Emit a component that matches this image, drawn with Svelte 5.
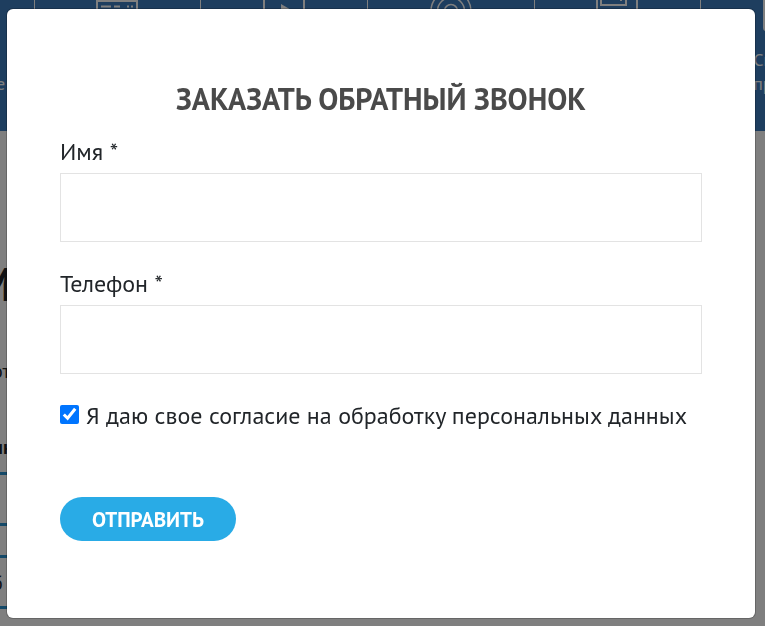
<script>
    let name = $state("");
    let phone = $state("");
    let agreed = $state(true);

    const services = [
        { icon: "none", lines: ["", "Продвижение"] },
        { icon: "site", lines: [] },
        { icon: "video", lines: [] },
        { icon: "target", lines: [] },
        { icon: "print", lines: [] },
        { icon: "phone", lines: ["Специ", "предл"] },
    ];

    function submit(event) {
        event.preventDefault();
    }
</script>

<div class="page" aria-hidden="true">
    <div class="services">
        <div class="services-row">
            {#each services as service}
                <div class="service">
                    <svg viewBox="0 0 42 42" fill="none" stroke="currentColor" stroke-width="2">
                        {#if service.icon === "site"}
                            <rect x="1" y="1" width="40" height="40" />
                            <path d="M1 12h40" />
                            <path d="M5 17.5h10M18 17.5h6M31 17.5h2M35 17.5h2" />
                        {:else if service.icon === "video"}
                            <rect x="1" y="1" width="40" height="40" />
                            <path d="M18 15l12 7-12 7z" fill="currentColor" stroke="none" />
                        {:else if service.icon === "target"}
                            <circle cx="21" cy="22" r="20" stroke-width="1.5" />
                            <circle cx="21" cy="22" r="13.5" stroke-width="1.5" />
                            <circle cx="21" cy="22" r="6.5" stroke-width="1.5" />
                        {:else if service.icon === "print"}
                            <rect x="1" y="1" width="40" height="40" />
                            <path d="M5 3v13h25V3M25 10v2" />
                        {:else if service.icon === "phone"}
                            <rect x="1" y="1" width="40" height="40" rx="2" />
                        {/if}
                    </svg>
                    <div class="service-name">
                        {#each service.lines as line}
                            <span>{line}</span>
                        {/each}
                    </div>
                </div>
            {/each}
        </div>
    </div>
    <div class="content">
        <div class="content-title">М</div>
        <div class="content-text">от</div>
        <div class="content-subtitle">ик</div>
        <div class="box"></div>
        <div class="box">б</div>
    </div>
</div>

<div class="overlay">
    <div class="modal" role="dialog" aria-modal="true" aria-labelledby="modal-title">
        <form onsubmit={submit}>
            <h2 id="modal-title">ЗАКАЗАТЬ ОБРАТНЫЙ ЗВОНОК</h2>

            <div class="field">
                <label for="name">Имя *</label>
                <input id="name" type="text" bind:value={name} />
            </div>

            <div class="field">
                <label for="phone">Телефон *</label>
                <input id="phone" type="tel" bind:value={phone} />
            </div>

            <div class="agree">
                <input id="agree" type="checkbox" bind:checked={agreed} />
                <label for="agree">Я даю свое согласие на обработку персональных данных</label>
            </div>

            <button type="submit">ОТПРАВИТЬ</button>
        </form>
    </div>
</div>

<style>
    :global(body) {
        margin: 0;
        overflow: hidden;
        background: #fff;
        color: #212529;
        font-family: "PT Sans", "Noto Sans", sans-serif;
    }

    .page {
        height: 100vh;
        overflow: hidden;
    }

    .services {
        margin-top: -40px;
        height: 171px;
        background: #3c7cbe;
        color: #fff;
        overflow: hidden;
    }

    .services-row {
        display: grid;
        grid-template-columns: repeat(6, 1fr);
        width: 1000px;
        height: 100%;
        margin-left: -132px;
    }

    .service {
        display: flex;
        flex-direction: column;
        align-items: center;
        gap: 17px;
        padding-top: 29px;
        border-right: 1px solid #fff;
    }

    .service svg {
        width: 42px;
        height: 42px;
    }

    .service-name {
        font-size: 18px;
        line-height: 24px;
    }

    .service-name span {
        display: block;
        min-height: 24px;
    }

    .service:first-child .service-name {
        width: 110px;
    }

    .service:last-child .service-name {
        width: 62px;
    }

    .content {
        width: 50%;
        margin-left: -8px;
    }

    .content-title {
        margin-left: -16px;
        padding-top: 123px;
        color: #212529;
        font-size: 46px;
        font-weight: 700;
        line-height: 60px;
    }

    .content-text {
        padding-top: 45px;
        font-size: 20px;
        line-height: 24px;
    }

    .content-subtitle {
        padding: 52px 0 13px;
        font-size: 20px;
        font-weight: 700;
        line-height: 24px;
    }

    .box {
        box-sizing: border-box;
        height: 54px;
        margin-bottom: 29px;
        border: 3px solid #2892d0;
        border-left: none;
        font-size: 20px;
        line-height: 50px;
    }

    .overlay {
        position: fixed;
        inset: 0;
        padding: 9px 10px 8px 7px;
        background: rgba(0, 0, 0, 0.5);
    }

    .modal {
        padding: 69px 53px 77px;
        background: #fff;
        border-radius: 6px;
        box-shadow: 0 0 0 1px rgba(0, 0, 0, 0.2);
    }

    form {
        display: flex;
        flex-direction: column;
    }

    h2 {
        margin: 0 0 15px;
        color: #4a4a4a;
        font-size: 30px;
        font-weight: 700;
        line-height: 42px;
        text-align: center;
        white-space: nowrap;
    }

    .field {
        display: flex;
        flex-direction: column;
        margin-bottom: 25px;
    }

    label {
        font-size: 24px;
        line-height: 34px;
        white-space: nowrap;
    }

    .field label {
        margin-bottom: 4px;
    }

    .field input {
        box-sizing: border-box;
        width: 100%;
        height: 69px;
        padding: 0 20px;
        border: 1px solid #e3e3e3;
        border-radius: 0;
        background: #fff;
        color: inherit;
        font: inherit;
        font-size: 24px;
    }

    .agree {
        display: flex;
        align-items: flex-start;
        gap: 7px;
        margin-bottom: 64px;
    }

    .agree input {
        flex: none;
        width: 19px;
        height: 19px;
        margin: 6px 0 0;
        accent-color: #0075ff;
    }

    button {
        align-self: flex-start;
        height: 44px;
        padding: 0 32px;
        border: none;
        border-radius: 22px;
        background: #29abe6;
        color: #fff;
        font: inherit;
        font-size: 21px;
        font-weight: 700;
        cursor: pointer;
    }
</style>
